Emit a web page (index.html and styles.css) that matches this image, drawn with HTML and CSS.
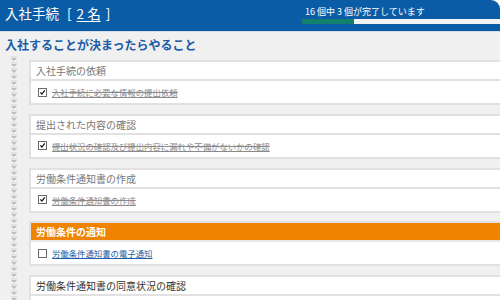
FILE: index.html
```html
<!DOCTYPE html>
<html lang="ja">
  <head>
    <meta charset="UTF-8" />
    <meta name="viewport" content="width=device-width, initial-scale=1.0" />
    <title>入社手続</title>
    <link rel="stylesheet" href="styles.css">
  </head>
  <body>
    <header class="top-bar">
      <h1 class="title">入社手続 <span class="bracket">[</span><a class="count" href="#">2 名</a><span class="bracket">]</span></h1>
      <div class="progress">
        <span class="progress-text">16 個中 3 個が完了しています</span>
        <div class="progress-bar"><div class="progress-fill" style="width: 52px"></div></div>
      </div>
    </header>

    <main class="panel">
      <h2 class="section-title">入社することが決まったらやること</h2>
      <div class="flow">
        <div class="rail">
          <svg width="10" height="250" viewBox="0 0 10 250">
            <defs>
              <pattern id="arrows" width="10" height="6" patternUnits="userSpaceOnUse">
                <rect x="2" y="0.5" width="6" height="0.8" fill="#cfcfcf" />
                <polygon points="2,2 8,2 5,5" fill="#bdbdbd" />
              </pattern>
            </defs>
            <rect width="10" height="250" fill="url(#arrows)" />
          </svg>
        </div>

        <div class="cards">
          <section class="card">
            <div class="card-head">入社手続の依頼</div>
            <div class="card-body">
              <span class="check checked"><svg viewBox="0 0 9 9"><path d="M1.8 4.4 L3.7 6.6 L7.4 1.8" /></svg></span>
              <a class="task done" href="#">入社手続に必要な情報の提出依頼</a>
            </div>
          </section>

          <section class="card">
            <div class="card-head">提出された内容の確認</div>
            <div class="card-body">
              <span class="check checked"><svg viewBox="0 0 9 9"><path d="M1.8 4.4 L3.7 6.6 L7.4 1.8" /></svg></span>
              <a class="task done" href="#">提出状況の確認及び提出内容に漏れや不備がないかの確認</a>
            </div>
          </section>

          <section class="card">
            <div class="card-head">労働条件通知書の作成</div>
            <div class="card-body">
              <span class="check checked"><svg viewBox="0 0 9 9"><path d="M1.8 4.4 L3.7 6.6 L7.4 1.8" /></svg></span>
              <a class="task done" href="#">労働条件通知書の作成</a>
            </div>
          </section>

          <section class="card current">
            <div class="card-head">労働条件の通知</div>
            <div class="card-body">
              <span class="check"></span>
              <a class="task" href="#">労働条件通知書の電子通知</a>
            </div>
          </section>

          <section class="card todo">
            <div class="card-head">労働条件通知書の同意状況の確認</div>
            <div class="card-body"></div>
          </section>
        </div>
      </div>
    </main>
  </body>
</html>
```

FILE: styles.css
```css
* {
  margin: 0;
  padding: 0;
  box-sizing: border-box;
}
html,
body {
  width: 500px;
  height: 300px;
  overflow: hidden;
}
body {
  background-color: #ffffff;
  font-family: "Noto Sans CJK JP", "Noto Sans", sans-serif;
  color: #333333;
}
.top-bar {
  display: flex;
  align-items: stretch;
  height: 32px;
  background-color: #0b5ca7;
  border-top-right-radius: 9px;
  border-bottom: 1px solid #d6dde6;
}
.title {
  width: 302px;
  padding: 2px 0 0 5px;
  font-size: 13.5px;
  font-weight: normal;
  line-height: 22px;
  color: #ffffff;
}
.bracket {
  margin: 0 5px;
}
.count {
  color: #ffffff;
  text-decoration: underline;
  text-underline-offset: 2px;
}
.progress {
  flex: 1;
  display: flex;
  flex-direction: column;
  padding-top: 5px;
}
.progress-text {
  padding-left: 3px;
  font-size: 9px;
  line-height: 13px;
  color: #ffffff;
}
.progress-bar {
  height: 5px;
  margin-top: 1px;
  background-color: #f2f2f2;
}
.progress-fill {
  height: 100%;
  background-color: #12806e;
}
.panel {
  height: 268px;
  overflow: hidden;
  background-color: #f0f0f0;
}
.section-title {
  padding: 4px 0 0 5px;
  font-size: 12px;
  line-height: 18px;
  font-weight: bold;
  color: #1b5ba6;
}
.flow {
  display: flex;
  margin-top: 6px;
}
.rail {
  width: 29px;
  margin-top: -4px;
  padding-left: 9px;
}
.rail svg {
  display: block;
}
.cards {
  flex: 1;
  display: flex;
  flex-direction: column;
  gap: 8.75px;
  margin-right: -10px;
}
.card {
  flex-shrink: 0;
  height: 45px;
  overflow: hidden;
  background-color: #ffffff;
  border: 2px solid #e1e1e1;
}
.card-head {
  height: 19px;
  padding-left: 5px;
  font-size: 10px;
  line-height: 17px;
  color: #777777;
  border-bottom: 2px solid #e1e1e1;
}
.card-body {
  display: flex;
  align-items: center;
  height: 22px;
  padding-left: 7px;
}
.check {
  display: inline-flex;
  flex-shrink: 0;
  width: 9px;
  height: 9px;
  margin-right: 5px;
  border: 1px solid #6a6a6a;
  background-color: #ffffff;
}
.check svg {
  width: 7px;
  height: 7px;
  fill: none;
  stroke: #111111;
  stroke-width: 1.6;
}
.task {
  font-size: 8.4px;
  line-height: 12px;
  color: #1c5fa8;
  text-decoration: underline;
}
.task.done {
  color: #8a8a8a;
  text-decoration: underline line-through;
}
.current .card-head {
  background-color: #f08300;
  color: #ffffff;
  font-weight: bold;
  border-bottom-color: #e8e8e8;
}
.todo .card-head {
  color: #333333;
}
```
